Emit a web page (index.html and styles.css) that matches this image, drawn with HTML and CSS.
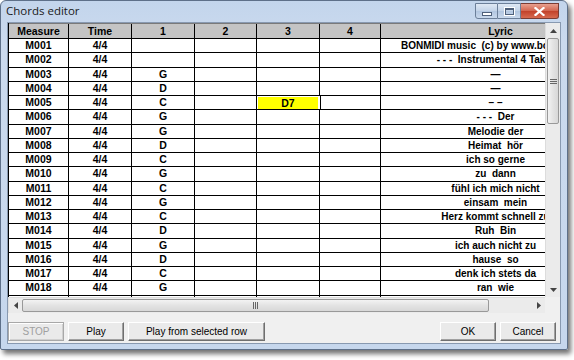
FILE: index.html
```html
<!DOCTYPE html>
<html>
<head>
<meta charset="utf-8">
<link rel="stylesheet" href="styles.css">
</head>
<body>
<div class="window">
  <div class="titlebar">
    <span class="title">Chords editor</span>
    <div class="caps">
      <div class="cap"><span class="min-glyph"></span></div>
      <div class="cap"><span class="max-glyph"></span></div>
      <div class="cap close"><svg width="11" height="9" viewBox="0 0 11 9"><path d="M1.5 1 L9.5 8 M9.5 1 L1.5 8" stroke="#fff" stroke-width="2.2" stroke-linecap="square"/></svg></div>
    </div>
  </div>
  <div class="client">
    <div class="gridarea">
      <div class="viewport">
        <div class="row head">
          <div class="c">Measure</div><div class="c">Time</div><div class="c">1</div><div class="c">2</div><div class="c">3</div><div class="c">4</div><div class="c">Lyric</div>
        </div>
        <div class="row"><div class="c">M001</div><div class="c">4/4</div><div class="c"></div><div class="c"></div><div class="c"></div><div class="c"></div><div class="c lyr">BONMIDI music &nbsp;(c) by www.bonmidi.de</div></div>
        <div class="row"><div class="c">M002</div><div class="c">4/4</div><div class="c"></div><div class="c"></div><div class="c"></div><div class="c"></div><div class="c lyr">- - - &nbsp;Instrumental 4 Takte</div></div>
        <div class="row"><div class="c">M003</div><div class="c">4/4</div><div class="c">G</div><div class="c"></div><div class="c"></div><div class="c"></div><div class="c lyr">—</div></div>
        <div class="row"><div class="c">M004</div><div class="c">4/4</div><div class="c">D</div><div class="c"></div><div class="c"></div><div class="c"></div><div class="c lyr">—</div></div>
        <div class="row"><div class="c">M005</div><div class="c">4/4</div><div class="c">C</div><div class="c"></div><div class="c sel">D7</div><div class="c"></div><div class="c lyr">– –</div></div>
        <div class="row"><div class="c">M006</div><div class="c">4/4</div><div class="c">G</div><div class="c"></div><div class="c"></div><div class="c"></div><div class="c lyr">- - - &nbsp;Der</div></div>
        <div class="row"><div class="c">M007</div><div class="c">4/4</div><div class="c">G</div><div class="c"></div><div class="c"></div><div class="c"></div><div class="c lyr">Melodie der</div></div>
        <div class="row"><div class="c">M008</div><div class="c">4/4</div><div class="c">D</div><div class="c"></div><div class="c"></div><div class="c"></div><div class="c lyr">Heimat &nbsp;hör</div></div>
        <div class="row"><div class="c">M009</div><div class="c">4/4</div><div class="c">C</div><div class="c"></div><div class="c"></div><div class="c"></div><div class="c lyr">ich so gerne</div></div>
        <div class="row"><div class="c">M010</div><div class="c">4/4</div><div class="c">G</div><div class="c"></div><div class="c"></div><div class="c"></div><div class="c lyr">zu &nbsp;dann</div></div>
        <div class="row"><div class="c">M011</div><div class="c">4/4</div><div class="c">C</div><div class="c"></div><div class="c"></div><div class="c"></div><div class="c lyr">fühl ich mich nicht</div></div>
        <div class="row"><div class="c">M012</div><div class="c">4/4</div><div class="c">G</div><div class="c"></div><div class="c"></div><div class="c"></div><div class="c lyr">einsam &nbsp;mein</div></div>
        <div class="row"><div class="c">M013</div><div class="c">4/4</div><div class="c">C</div><div class="c"></div><div class="c"></div><div class="c"></div><div class="c lyr">Herz kommt schnell zu</div></div>
        <div class="row"><div class="c">M014</div><div class="c">4/4</div><div class="c">D</div><div class="c"></div><div class="c"></div><div class="c"></div><div class="c lyr">Ruh &nbsp;Bin</div></div>
        <div class="row"><div class="c">M015</div><div class="c">4/4</div><div class="c">G</div><div class="c"></div><div class="c"></div><div class="c"></div><div class="c lyr">ich auch nicht zu</div></div>
        <div class="row"><div class="c">M016</div><div class="c">4/4</div><div class="c">D</div><div class="c"></div><div class="c"></div><div class="c"></div><div class="c lyr">hause &nbsp;so</div></div>
        <div class="row"><div class="c">M017</div><div class="c">4/4</div><div class="c">C</div><div class="c"></div><div class="c"></div><div class="c"></div><div class="c lyr">denk ich stets da</div></div>
        <div class="row"><div class="c">M018</div><div class="c">4/4</div><div class="c">G</div><div class="c"></div><div class="c"></div><div class="c"></div><div class="c lyr">ran &nbsp;wie</div></div>
        <div class="row"><div class="c"></div><div class="c"></div><div class="c"></div><div class="c"></div><div class="c"></div><div class="c"></div><div class="c lyr"></div></div>
      </div>
      <div class="vscroll">
        <div class="sbtn"><svg width="7" height="4" viewBox="0 0 7 4"><path d="M0 4 L3.5 0 L7 4Z" fill="#444"/></svg></div>
        <div class="vthumb"><span class="grip-h"></span></div>
        <div class="vtrack"></div>
        <div class="sbtn"><svg width="7" height="4" viewBox="0 0 7 4"><path d="M0 0 L3.5 4 L7 0Z" fill="#444"/></svg></div>
      </div>
      <div class="hscroll">
        <div class="sbtn h"><svg width="4" height="7" viewBox="0 0 4 7"><path d="M4 0 L0 3.5 L4 7Z" fill="#444"/></svg></div>
        <div class="hthumb"><span class="grip-v"></span></div>
        <div class="htrack"></div>
        <div class="sbtn h"><svg width="4" height="7" viewBox="0 0 4 7"><path d="M0 0 L4 3.5 L0 7Z" fill="#444"/></svg></div>
      </div>
      <div class="corner"></div>
    </div>
    <div class="buttons">
      <button class="btn dis w56">STOP</button>
      <button class="btn w56">Play</button>
      <button class="btn w136">Play from selected row</button>
      <span class="spacer"></span>
      <button class="btn w56">OK</button>
      <button class="btn w56">Cancel</button>
    </div>
  </div>
</div>
</body>
</html>
```
FILE: styles.css
```css
html, body {
  margin: 0;
  padding: 0;
  background: #ffffff;
}
body {
  width: 574px;
  height: 360px;
  overflow: hidden;
}
.window {
  box-sizing: border-box;
  width: 568px;
  height: 350px;
  border: 1px solid #5e7089;
  border-radius: 6px 6px 2px 2px;
  background: linear-gradient(#c3d5ec, #cbdaee 40px, #c6d7ed);
  box-shadow: 3px 4px 5px rgba(0,0,0,0.55);
  display: flex;
  flex-direction: column;
}
.titlebar {
  height: 21px;
  display: flex;
  align-items: flex-start;
  padding-left: 5px;
}
.title {
  font-family: "Open Sans", "Noto Sans", sans-serif;
  font-size: 11.5px;
  color: #1a1a1a;
  margin-top: 2px;
}
.caps {
  margin-left: auto;
  margin-right: 8px;
  display: flex;
  margin-top: 2px;
}
.cap {
  box-sizing: border-box;
  width: 23px;
  height: 16px;
  border: 1px solid #6c7f99;
  border-left: none;
  background: linear-gradient(#dfe8f4, #c3d3e8 50%, #b2c6e0 51%, #c9d8ec);
  display: flex;
  align-items: center;
  justify-content: center;
}
.cap:first-child {
  border-left: 1px solid #6c7f99;
  border-radius: 0 0 0 3px;
}
.cap.close {
  width: 38px;
  background: linear-gradient(#e8a08f, #d2644e 50%, #c2412a 51%, #d76a50);
  border-color: #7a3c34;
  border-radius: 0 0 3px 0;
}
.min-glyph {
  width: 8px;
  height: 2px;
  margin-top: 5px;
  background: #fff;
  border: 1px solid #4f607a;
}
.max-glyph {
  box-sizing: border-box;
  width: 9px;
  height: 7px;
  border: 1px solid #4f607a;
  border-top-width: 2px;
  background: transparent;
  outline: 1px solid #fff;
}
.client {
  flex: 1;
  margin: 0 6px 5px 6px;
  background: #f0f0f0;
  border: 1px solid #8899b0;
  display: flex;
  flex-direction: column;
}
.gridarea {
  margin: 0;
  display: grid;
  grid-template-columns: 537px 15px;
  grid-template-rows: 274px 16px;
  height: 290px;
}
.viewport {
  overflow: hidden;
  background: #ffffff;
  border-left: 1px solid #000;
  font-family: "Liberation Sans", Arial, sans-serif;
  font-weight: bold;
  font-size: 10.5px;
  color: #000;
}
.row {
  display: grid;
  grid-template-columns: 60px 63px 63px 62px 63px 61px 230px;
  height: 14.25px;
  box-sizing: border-box;
  border-bottom: 1px solid #000;
}
.row.head {
  height: 16px;
  background: #c4c4c4;
  border-top: 1px solid #7a7a7a;
  border-bottom: 1px solid #000;
}
.c {
  box-sizing: border-box;
  border-right: 1px solid #000;
  text-align: center;
  line-height: 13px;
  white-space: nowrap;
  overflow: hidden;
}
.head .c { line-height: 14px; }
.head .c:last-child { padding-left: 10px; }
.c.lyr { text-align: center; font-size: 10px; }
.c.sel { background: #ffff00; margin: 1px 2px 0 1px; border-right: none; line-height: 12px; }
.row .c.sel + .c { border-left: 1px solid #000; }
.vscroll {
  display: flex;
  flex-direction: column;
  background: #ebebeb;
  border-left: 1px solid #dcdcdc;
}
.sbtn {
  height: 15px;
  flex: none;
  display: flex;
  align-items: center;
  justify-content: center;
}
.sbtn.h { width: 13px; height: auto; }
.vthumb {
  height: 86px;
  margin: 0 1px;
  box-sizing: border-box;
  border: 1px solid #999;
  border-radius: 2px;
  background: linear-gradient(90deg, #f3f3f3, #e3e3e3 50%, #d8d8d8);
  display: flex;
  align-items: center;
  justify-content: center;
}
.vtrack { flex: 1; }
.grip-h {
  width: 7px;
  height: 5px;
  background: repeating-linear-gradient(#666 0 1px, transparent 1px 2px);
}
.hscroll {
  display: flex;
  background: #ebebeb;
  border-top: 1px solid #dcdcdc;
  border-left: 1px solid #dcdcdc;
}
.hthumb {
  width: 467px;
  margin: 1px 0;
  box-sizing: border-box;
  border: 1px solid #999;
  border-radius: 2px;
  background: linear-gradient(#f3f3f3, #e3e3e3 50%, #d8d8d8);
  display: flex;
  align-items: center;
  justify-content: center;
}
.htrack { flex: 1; }
.grip-v {
  width: 5px;
  height: 7px;
  background: repeating-linear-gradient(90deg, #666 0 1px, transparent 1px 2px);
}
.corner { background: #f0f0f0; }
.buttons {
  display: flex;
  align-items: flex-start;
  gap: 4px;
  padding: 9px 4px 0 0;
}
.spacer { flex: 1; }
.btn {
  box-sizing: border-box;
  height: 19px;
  padding: 0;
  font-family: "Liberation Sans", Arial, sans-serif;
  font-size: 10px;
  color: #000;
  background: #eaeaea;
  border: 1px solid;
  border-color: #ffffff #6f6f6f #6f6f6f #ffffff;
  box-shadow: inset -1px -1px 0 #a0a0a0;
}
.btn.dis {
  color: #a0a0a0;
  border-color: #a8a8a8;
  box-shadow: inset 1px 1px 0 #fff, inset -1px -1px 0 #d0d0d0;
}
.w56 { width: 56px; }
.w136 { width: 137px; }
```
